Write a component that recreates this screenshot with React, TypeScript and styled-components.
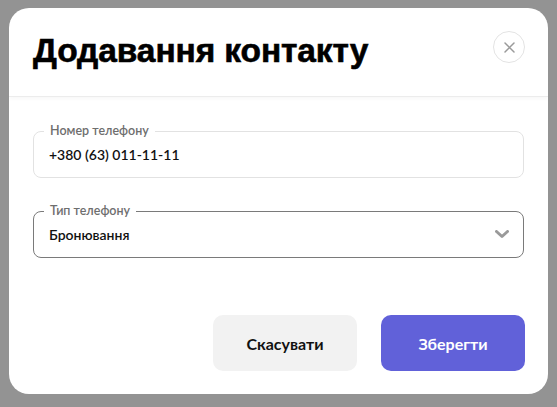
import React from "react";
import styled, { createGlobalStyle } from "styled-components";

const Global = createGlobalStyle`
  html, body { margin: 0; padding: 0; }
  body {
    background: #939393;
    font-family: Lato, "Noto Sans", sans-serif;
    width: 557px;
    height: 407px;
    overflow: hidden;
  }
`;

const Page = styled.div`
  padding: 8px 9px;
  box-sizing: border-box;
  width: 557px;
  height: 407px;
`;

const Modal = styled.div`
  width: 539px;
  height: 386px;
  background: #fff;
  border-radius: 20px;
  display: flex;
  flex-direction: column;
  overflow: hidden;
`;

const Header = styled.div`
  height: 89px;
  box-sizing: border-box;
  display: flex;
  align-items: center;
  justify-content: space-between;
  padding: 0 23px 0 24px;
  border-bottom: 1px solid #ececec;
  box-shadow: 0 2px 4px rgba(0, 0, 0, 0.03);
`;

const Title = styled.h1`
  margin: 0 0 2px 0;
  font-family: "Liberation Sans", Arial, sans-serif;
  font-weight: 700;
  font-size: 33.5px;
  letter-spacing: -0.1px;
  color: #000;
  -webkit-text-stroke: 0.6px #000;
`;

const CloseButton = styled.button`
  width: 32px;
  height: 32px;
  border-radius: 50%;
  border: 1px solid #e3e3e3;
  background: #fff;
  display: flex;
  align-items: center;
  justify-content: center;
  padding: 0;
  margin-top: -10px;
  cursor: pointer;
`;

const Body = styled.div`
  flex: 1;
  display: flex;
  flex-direction: column;
  padding: 34px 24px 0 24px;
  gap: 33px;
`;

const Field = styled.div<{ $active?: boolean }>`
  position: relative;
  height: 47px;
  box-sizing: border-box;
  border: 1px solid ${(p) => (p.$active ? "#7a7a7a" : "#e2e2e2")};
  border-radius: 8px;
  display: flex;
  align-items: center;
  padding: 0 14px 0 15px;
`;

const Label = styled.span`
  position: absolute;
  top: -9px;
  left: 10px;
  padding: 0 6px;
  background: #fff;
  font-size: 12.5px;
  font-weight: 600;
  color: #6e6e6e;
  line-height: 16px;
`;

const Value = styled.span`
  flex: 1;
  font-family: Lato, sans-serif;
  font-size: 14px;
  font-weight: 600;
  color: #111;
  padding-top: 0px;
`;

const Footer = styled.div`
  display: flex;
  justify-content: flex-end;
  gap: 24px;
  padding: 0 23px 23px 0;
`;

const Button = styled.button<{ $primary?: boolean }>`
  width: 144px;
  height: 56px;
  border: none;
  border-radius: 10px;
  background: ${(p) => (p.$primary ? "#6161d9" : "#f2f2f2")};
  color: ${(p) => (p.$primary ? "#fff" : "#111")};
  font-family: Lato, sans-serif;
  font-weight: 700;
  font-size: 16px;
  cursor: pointer;
`;

export default function App() {
  return (
    <>
      <Global />
      <Page>
        <Modal>
          <Header>
            <Title>Додавання контакту</Title>
            <CloseButton aria-label="close">
              <svg width="11" height="11" viewBox="0 0 11 11">
                <path d="M1 1 L10 10 M10 1 L1 10" stroke="#9a9a9a" strokeWidth="1.5" strokeLinecap="round" />
              </svg>
            </CloseButton>
          </Header>
          <Body>
            <Field>
              <Label>Номер телефону</Label>
              <Value>+380 (63) 011-11-11</Value>
            </Field>
            <Field $active>
              <Label>Тип телефону</Label>
              <Value>Бронювання</Value>
              <svg width="14" height="9" viewBox="0 0 14 9">
                <path d="M1.5 1.5 L7 6.5 L12.5 1.5" stroke="#9a9a9a" strokeWidth="3" fill="none" strokeLinejoin="round" strokeLinecap="round" />
              </svg>
            </Field>
          </Body>
          <Footer>
            <Button>Скасувати</Button>
            <Button $primary>Зберегти</Button>
          </Footer>
        </Modal>
      </Page>
    </>
  );
}
